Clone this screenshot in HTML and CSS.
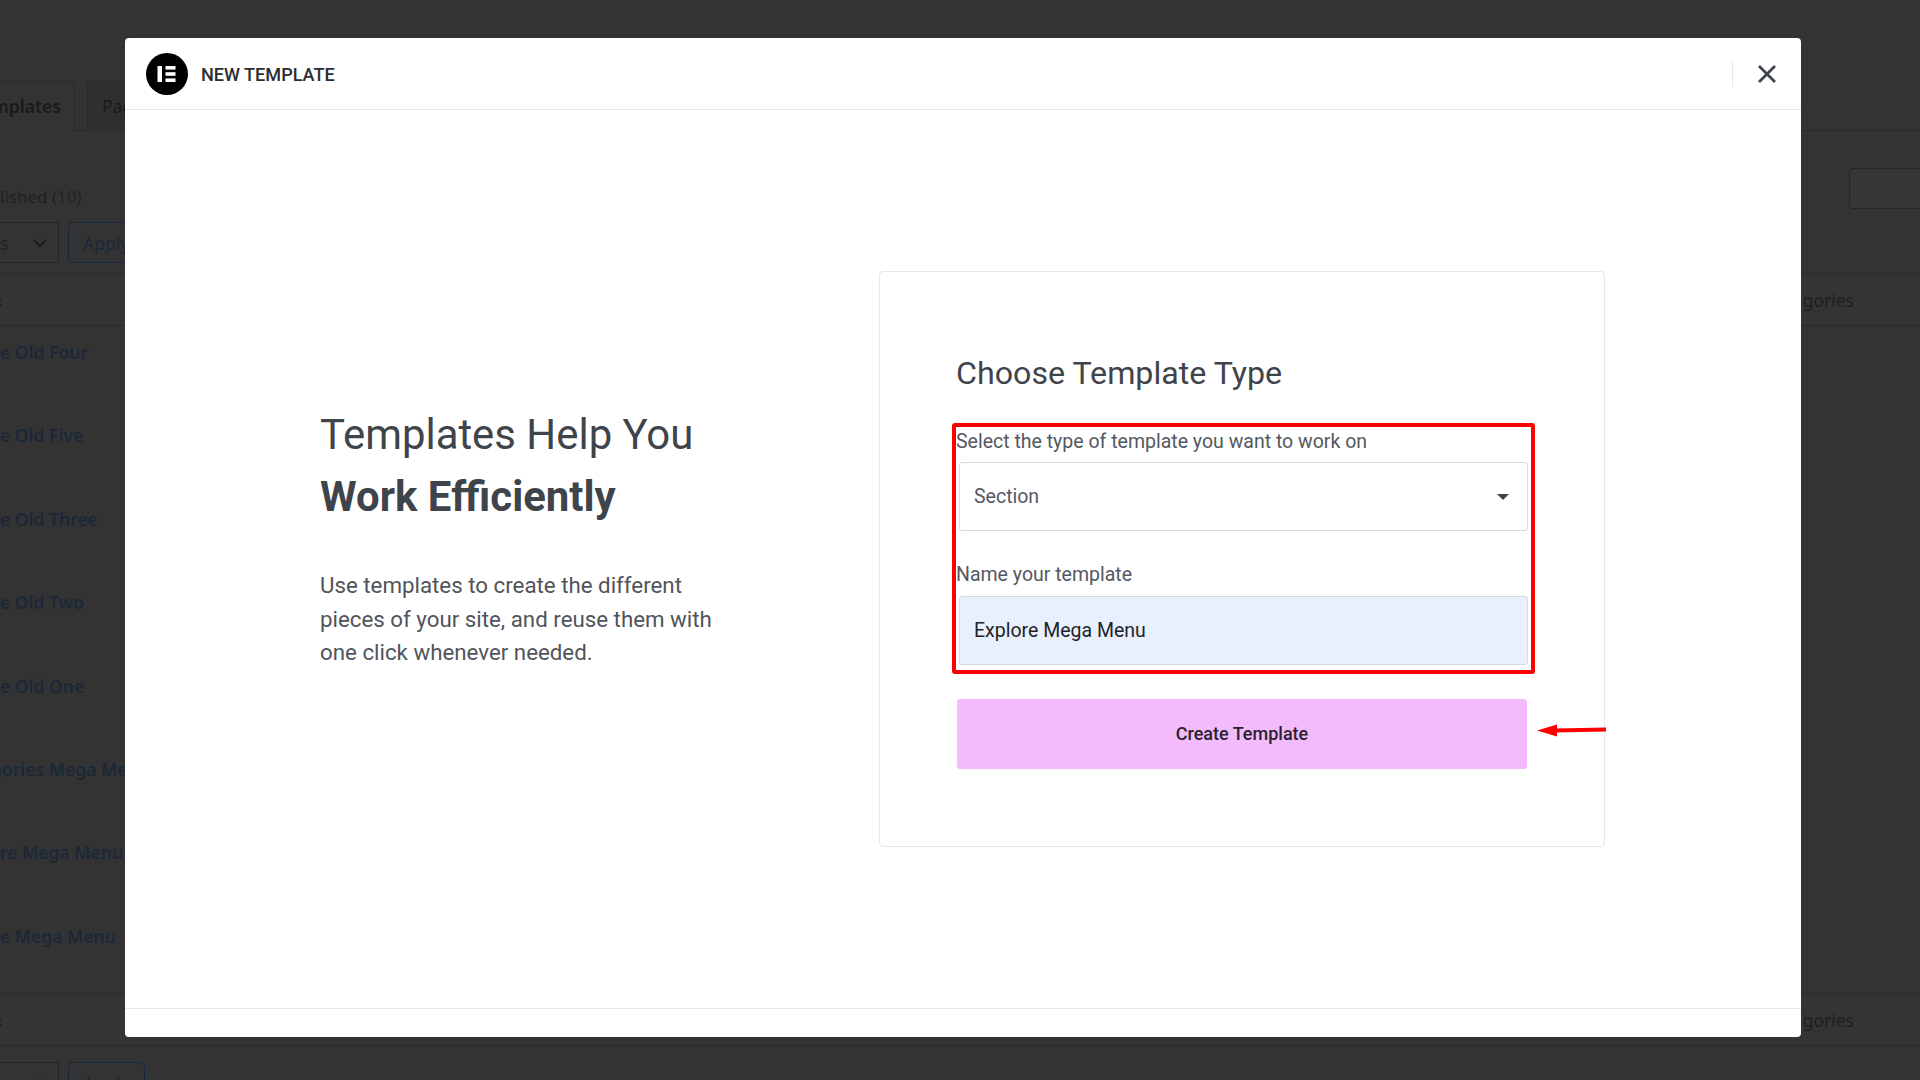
FILE: index.html
```html
<!DOCTYPE html>
<html lang="en">
<head>
<meta charset="utf-8">
<title>New Template</title>
<link rel="stylesheet" href="styles.css">
</head>
<body>
<div class="page">
  <div class="tabs">
    <span class="tab tab-active"><span class="tab-label">mplates</span></span>
    <span class="tab tab-next">Pages</span>
  </div>
  <div class="status-row">
    <span class="status">lished (10)</span>
    <span class="search-box"></span>
  </div>
  <div class="bulk">
    <span class="bulk-select"><span>s</span><svg class="chev" viewBox="0 0 16 10"><path d="M2 2l6 6 6-6"/></svg></span>
    <span class="apply">Apply</span>
  </div>
  <div class="thead"><span class="sort">&lsaquo;</span><span class="col-cat">gories</span></div>
  <div class="rows">
    <div class="row">e Old Four</div>
    <div class="row">e Old Five</div>
    <div class="row">e Old Three</div>
    <div class="row">e Old Two</div>
    <div class="row">e Old One</div>
    <div class="row row-cut">gories Mega Menu</div>
    <div class="row">re Mega Menu</div>
    <div class="row">e Mega Menu</div>
  </div>
  <div class="thead"><span class="sort">&lsaquo;</span><span class="col-cat">gories</span></div>
  <div class="bulk bulk-bottom">
    <span class="bulk-select"><span>s</span><svg class="chev" viewBox="0 0 16 10"><path d="M2 2l6 6 6-6"/></svg></span>
    <span class="apply">Apply</span>
  </div>
</div>

<div class="modal">
  <header class="modal-head">
    <svg class="logo" viewBox="0 0 42 42" aria-hidden="true">
      <circle cx="21" cy="21" r="21" fill="#000"/>
      <rect x="11.5" y="13" width="4.5" height="16" fill="#fff"/>
      <rect x="19.5" y="13" width="10" height="3.6" fill="#fff"/>
      <rect x="19.5" y="19.2" width="10" height="3.6" fill="#fff"/>
      <rect x="19.5" y="25.4" width="10" height="3.6" fill="#fff"/>
    </svg>
    <span class="modal-title">NEW TEMPLATE</span>
    <span class="head-sep"></span>
    <svg class="close" viewBox="0 0 20 20" aria-hidden="true"><path d="M2 2l16 16M18 2L2 18"/></svg>
  </header>
  <main class="modal-body">
    <section class="intro">
      <h1 class="intro-title">Templates Help You <strong>Work Efficiently</strong></h1>
      <p class="intro-text">Use templates to create the different pieces of your site, and reuse them with one click whenever needed.</p>
    </section>
    <section class="card">
      <h2 class="card-title">Choose Template Type</h2>
      <div class="fields">
        <div class="label">Select the type of template you want to work on</div>
        <div class="control">Section<span class="caret"></span></div>
        <div class="label label-second">Name your template</div>
        <div class="control control-filled">Explore Mega Menu</div>
      </div>
      <div class="submit-row">
        <div class="submit">Create Template</div>
        <svg class="arrow" viewBox="0 0 70 14" aria-hidden="true">
          <path class="arrow-head" d="M0 7.5L20 1.5V13.5Z"/>
          <path class="arrow-tail" d="M18 7.6L69 6.4"/>
        </svg>
      </div>
    </section>
  </main>
  <footer class="modal-foot"></footer>
</div>
</body>
</html>
```

FILE: styles.css
```css
* { box-sizing: border-box; }
html, body { margin: 0; height: 100%; }
body {
  width: 1920px;
  height: 1080px;
  overflow: hidden;
  background: #333333;
  font-family: "Roboto", "Liberation Sans", sans-serif;
  position: relative;
}

/* dimmed admin page behind the dialog */
.page {
  font-family: "Noto Sans", "Open Sans", sans-serif;
  font-size: 17.5px;
  color: #1f1f1f;
  padding-top: 81px;
}
.tabs {
  display: flex;
  gap: 12px;
  height: 50px;
  border-bottom: 1px solid #292929;
}
.tab {
  display: flex;
  align-items: center;
  height: 50px;
  padding: 0 14px 2px;
  border: 1px solid #2b2b2b;
  border-bottom: 0;
  background: #2f2f2f;
  color: #1a1a1a;
}
.tab-active { padding: 0 0 2px; border-left: 0; font-weight: 600; background: #333; width: 75px; overflow: hidden; }
.tab-label { margin-left: -8px; }
.tab-next { width: 160px; }
.status-row {
  display: flex;
  justify-content: space-between;
  height: 91px;
  padding-top: 37px;
  color: #222;
}
.status { line-height: 26px; margin-top: 16px; font-size: 17px; }
.search-box {
  width: 90px;
  height: 41px;
  margin-right: -19px;
  border: 1px solid #252525;
  border-radius: 4px;
  background: #363636;
}
.bulk { display: flex; gap: 9px; height: 41px; }
.bulk-select {
  display: flex;
  align-items: center;
  justify-content: space-between;
  width: 59px;
  border: 1px solid #242424;
  border-left: 0;
  border-radius: 0 4px 4px 0;
  padding-right: 10px;
  color: #222;
}
.chev { width: 16px; height: 10px; }
.chev path { fill: none; stroke: #1a1a1a; stroke-width: 2; }
.apply {
  display: flex;
  align-items: center;
  width: 77px;
  padding-left: 14px;
  border: 1px solid #16283a;
  border-radius: 4px;
  color: #1b2838;
}
.thead {
  display: flex;
  align-items: center;
  justify-content: space-between;
  height: 53px;
  margin-top: 10px;
  padding-right: 66px;
  border-top: 1px solid #2a2a2a;
  border-bottom: 1px solid #2a2a2a;
  background: #343434;
  color: #1f1f1f;
}
.sort { margin-left: -3px; }
.rows { display: flex; flex-direction: column; }
.row {
  height: 83.4px;
  padding-top: 13px;
  line-height: 26px;
  font-weight: 600;
  font-size: 17.5px;
  color: #1b2838;
  white-space: nowrap;
}
.row-cut { margin-left: -9px; }
.rows + .thead { margin-top: 0; height: 53px; }
.bulk-bottom { margin-top: 16px; }

/* dialog */
.modal {
  position: absolute;
  left: 125px;
  top: 38px;
  width: 1676px;
  height: 999px;
  display: flex;
  flex-direction: column;
  background: #fff;
  border-radius: 4px;
  color: #3f444b;
}
.modal-head {
  display: flex;
  align-items: center;
  height: 72px;
  flex: none;
  padding: 1px 24px 0 21px;
  border-bottom: 1px solid #e6e8ea;
}
.logo { width: 42px; height: 42px; flex: none; }
.modal-title {
  margin-left: 13px;
  font-size: 18.1px;
  font-weight: 500;
  color: #2a2d32;
  flex: 1;
}
.head-sep { width: 1px; height: 26px; background: #e6e8ea; margin-right: 24px; }
.close { width: 20px; height: 20px; flex: none; }
.close path { fill: none; stroke: #3f444b; stroke-width: 2.8; }

.modal-body {
  flex: 1;
  display: flex;
  align-items: center;
  padding-left: 195px;
}
.intro { width: 410px; margin-right: 149px; padding-bottom: 44px; }
.intro-title {
  margin: 0;
  font-size: 41.9px;
  line-height: 62px;
  font-weight: 400;
  color: #3f444b;
}
.intro-title strong { display: block; font-weight: 700; }
.intro-text {
  margin: 41px 0 0;
  font-size: 22.3px;
  line-height: 33.5px;
  color: #50545b;
}
.card {
  width: 726px;
  height: 576px;
  flex: none;
  padding: 81px 77px 0 76px;
  border: 1px solid #e6e8ea;
  border-radius: 4px;
  background: #fff;
}
.card-title {
  margin: 0;
  font-size: 32.2px;
  line-height: 40px;
  font-weight: 400;
  color: #3f444b;
}
.fields {
  margin: 30px 0 0 -4px;
  width: 583px;
  height: 251px;
  padding: 4px 0 0 0;
  border: 4px solid #ff0000;
  border-radius: 3px;
}
.label {
  margin-top: -5px;
  font-size: 19.5px;
  line-height: 32px;
  color: #54585f;
  white-space: nowrap;
}
.label-second { margin-top: 28px; }
.control {
  position: relative;
  display: flex;
  align-items: center;
  width: 569px;
  height: 69px;
  margin-top: 4px;
  margin-left: 3px;
  padding-left: 14px;
  padding-bottom: 1px;
  border: 1px solid #d5d8dc;
  border-radius: 3px;
  background: #fff;
  font-size: 19.5px;
  color: #54585f;
}
.control-filled { margin-top: 5px; background: #e8f0fe; color: #1f2328; }
.caret {
  position: absolute;
  right: 18px;
  top: 31px;
  border-left: 6px solid transparent;
  border-right: 6px solid transparent;
  border-top: 6px solid #3f444b;
}
.submit-row {
  display: flex;
  align-items: center;
  margin-top: 25px;
  margin-left: 1px;
  position: relative;
}
.submit {
  width: 570px;
  height: 70px;
  padding-bottom: 2px;
  display: flex;
  align-items: center;
  justify-content: center;
  border-radius: 3px;
  background: #f3bbfc;
  font-size: 18px;
  font-weight: 500;
  color: #2a1f2e;
}
.arrow {
  position: absolute;
  left: 580px;
  top: 24px;
  width: 70px;
  height: 14px;
}
.arrow-head { fill: #ff0000; }
.arrow-tail { fill: none; stroke: #ff0000; stroke-width: 4; }
.modal-foot {
  flex: none;
  height: 29px;
  border-top: 1px solid #e6e8ea;
}
```
